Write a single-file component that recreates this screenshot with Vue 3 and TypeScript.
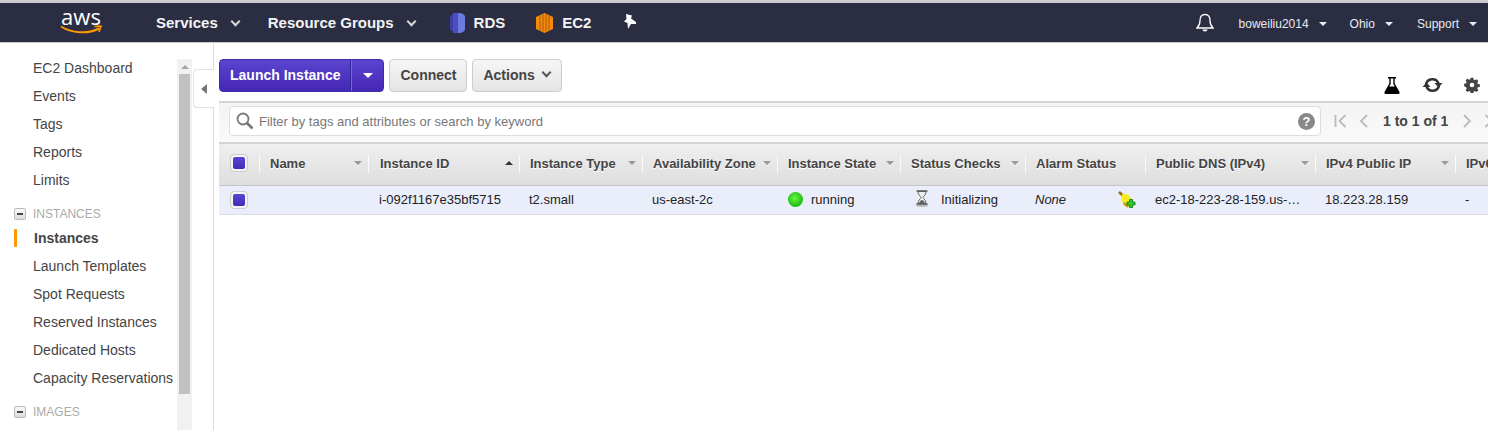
<script setup lang="ts">
interface Column {
  label: string
  sort: 'none' | 'down' | 'up'
}

const topItems = ['EC2 Dashboard', 'Events', 'Tags', 'Reports', 'Limits']
const instanceItems = [
  'Instances',
  'Launch Templates',
  'Spot Requests',
  'Reserved Instances',
  'Dedicated Hosts',
  'Capacity Reservations'
]

const columns: Column[] = [
  { label: 'Name', sort: 'down' },
  { label: 'Instance ID', sort: 'up' },
  { label: 'Instance Type', sort: 'down' },
  { label: 'Availability Zone', sort: 'down' },
  { label: 'Instance State', sort: 'down' },
  { label: 'Status Checks', sort: 'down' },
  { label: 'Alarm Status', sort: 'none' },
  { label: 'Public DNS (IPv4)', sort: 'down' },
  { label: 'IPv4 Public IP', sort: 'down' },
  { label: 'IPv6 IPs', sort: 'none' }
]
</script>

<template>
  <div class="console">
    <header class="topbar">
      <div class="logo">
        <span class="logo-text">aws</span>
        <svg class="smile" width="42" height="10" viewBox="0 0 42 10">
          <path d="M1 1.500C11 8 28 9.500 39 3.500" fill="none" stroke="#f90" stroke-width="2" />
          <path d="M34.500 1.500L41 1.200L39 7" fill="none" stroke="#f90" stroke-width="1.600" />
        </svg>
      </div>
      <a class="nav-main services">Services<i class="chev"></i></a>
      <a class="nav-main groups">Resource Groups<i class="chev"></i></a>
      <a class="shortcut rds">
        <svg width="15" height="20" viewBox="0 0 15 20">
          <path d="M3 1.500C1 2 0 3 0 4v12c0 1 1 2 3 2.500z" fill="#3b3fa6" />
          <rect x="3" y="0" width="5" height="20" fill="#4a4fc0" />
          <path d="M8 0h2c3 .5 5 2 5 4v12c0 2-2 3.500-5 4H8z" fill="#6d7be0" />
        </svg>
        RDS
      </a>
      <a class="shortcut ec2">
        <svg width="17" height="20" viewBox="0 0 17 20">
          <path d="M0 4l8.500-4L17 4v12l-8.500 4L0 16z" fill="#f58a0b" />
          <path d="M4 2.500v15M7 1.500v17M10 1.500v17M13 2.500v15" stroke="#a85c08" stroke-width="1" />
        </svg>
        EC2
      </a>
      <svg class="pin" width="14" height="15" viewBox="0 0 14 15">
        <path d="M3 0L9 1.500L8 4.500L13 8L13 10L8 10L5 15L4.500 9L1 7.500L3.500 5z" fill="#fff" />
      </svg>
      <svg class="bell" width="18" height="20" viewBox="0 0 18 20">
        <path d="M9 1.500c-3.500 0-5 2.500-5 6 0 3.500-1 5.500-3 7.500h16c-2-2-3-4-3-7.500 0-3.500-1.500-6-5-6z" fill="none" stroke="#fff" stroke-width="1.300" />
        <path d="M6.500 16.500h5c0 1-1 2-2.500 2s-2.500-1-2.500-2z" fill="#fff" />
      </svg>
      <a class="nav-small user">boweiliu2014<i class="caret"></i></a>
      <a class="nav-small region">Ohio<i class="caret"></i></a>
      <a class="nav-small support">Support<i class="caret"></i></a>
    </header>

    <div class="body">
      <aside class="sidebar">
        <nav class="menu">
          <a v-for="item in topItems" :key="item" class="menu-item">{{ item }}</a>
          <div class="section"><span class="minus"></span>INSTANCES</div>
          <a
            v-for="(item, i) in instanceItems"
            :key="item"
            class="menu-item"
            :class="{ active: i === 0 }"
          >{{ item }}</a>
          <div class="section images"><span class="minus"></span>IMAGES</div>
        </nav>
        <div class="scrollbar">
          <span class="scroll-up"></span>
          <span class="scroll-thumb"></span>
        </div>
      </aside>

      <div class="collapse-col">
        <div class="collapse-tab"><span class="tri-left"></span></div>
      </div>

      <main class="content">
        <div class="toolbar">
          <div class="launch">
            <span class="launch-main">Launch Instance</span>
            <span class="launch-drop"><i></i></span>
          </div>
          <button class="btn">Connect</button>
          <button class="btn">Actions<i class="btn-chev"></i></button>
          <div class="tools">
            <svg width="16" height="18" viewBox="0 0 16 18">
              <path d="M4 1h8v1.500h-1.300v5L15.500 16c.4 1-.2 2-1.300 2H1.800C.7 18 .1 17 .5 16L5.300 7.500v-5H4z" fill="#000" />
              <path d="M6.700 2.500h2.600v5.400l1.500 2.600H5.200l1.500-2.600z" fill="#fff" />
            </svg>
            <svg width="21" height="18" viewBox="0 0 21 18">
              <path d="M4 8.500A6.500 6.500 0 0 1 16.500 7.500" fill="none" stroke="#333" stroke-width="2.600" />
              <path d="M12.500 7h8l-4 4.500z" fill="#333" />
              <path d="M17 9.500A6.500 6.500 0 0 1 4.500 10.500" fill="none" stroke="#333" stroke-width="2.600" />
              <path d="M.5 11h8l-4-4.500z" fill="#333" />
            </svg>
            <svg width="16" height="16" viewBox="0 0 16 16">
              <path d="M6.500 0h3l.4 2.200 1.300.6 1.900-1.200 2 2-1.200 1.900.6 1.300 2.200.4v3l-2.200.4-.6 1.300 1.200 1.900-2 2-1.900-1.200-1.300.6-.4 2.200h-3l-.4-2.200-1.300-.6-1.900 1.200-2-2 1.200-1.900-.6-1.300L-.7 9.500v-3l2.200-.4.6-1.300L.9 2.900l2-2 1.900 1.200 1.300-.6z" fill="#444" transform="translate(.8 .8) scale(.9)" />
              <circle cx="8" cy="8" r="2.300" fill="#fff" />
            </svg>
          </div>
        </div>

        <div class="filter-band">
          <div class="search">
            <svg class="glass" width="18" height="18" viewBox="0 0 18 18">
              <circle cx="7" cy="7" r="5.500" fill="none" stroke="#777" stroke-width="1.800" />
              <path d="M11 11l5.500 5.500" stroke="#777" stroke-width="2.600" />
            </svg>
            <span class="placeholder">Filter by tags and attributes or search by keyword</span>
            <span class="help">?</span>
          </div>
          <div class="pager">
            <svg width="13" height="14" viewBox="0 0 13 14">
              <path d="M1.500 1v12M11.500 1l-6 6 6 6" fill="none" stroke="#bbb" stroke-width="1.800" />
            </svg>
            <svg class="pager-prev" width="9" height="14" viewBox="0 0 9 14">
              <path d="M8 1L2 7l6 6" fill="none" stroke="#bbb" stroke-width="1.800" />
            </svg>
            <span class="pager-text">1 to 1 of 1</span>
            <svg class="pager-next" width="9" height="14" viewBox="0 0 9 14">
              <path d="M1 1l6 6-6 6" fill="none" stroke="#bbb" stroke-width="1.800" />
            </svg>
            <svg class="pager-last" width="13" height="14" viewBox="0 0 13 14">
              <path d="M1.500 1l6 6-6 6M11.500 1v12" fill="none" stroke="#bbb" stroke-width="1.800" />
            </svg>
          </div>
        </div>

        <div class="grid head">
          <div class="cell check-cell"><span class="check"><i></i></span></div>
          <div v-for="col in columns" :key="col.label" class="cell head-cell">
            <span class="head-label">{{ col.label }}</span>
            <i v-if="col.sort === 'down'" class="sort"></i>
            <i v-else-if="col.sort === 'up'" class="sort up"></i>
          </div>
        </div>

        <div class="grid row">
          <div class="cell check-cell"><span class="check"><i></i></span></div>
          <div class="cell"></div>
          <div class="cell id-cell">i-092f1167e35bf5715</div>
          <div class="cell">t2.small</div>
          <div class="cell">us-east-2c</div>
          <div class="cell state"><span class="dot"></span>running</div>
          <div class="cell status">
            <svg class="hourglass" width="14" height="17" viewBox="0 0 14 17">
              <ellipse cx="7" cy="15.500" rx="6.500" ry="1.400" fill="#bbb" />
              <path d="M1.500 1h11M1.500 14h11" stroke="#555" stroke-width="1.500" />
              <path d="M3 1.500h8C11 5 8.500 6 8 7.500c.5 1.500 3 2.500 3 6H3c0-3.500 2.500-4.500 3-6-.5-1.500-3-2.500-3-6z" fill="#eee" stroke="#555" stroke-width=".9" />
              <path d="M4 13.300c.5-2 2-3 3-3.300 1 .3 2.500 1.300 3 3.300z" fill="#666" />
            </svg>
            Initializing
          </div>
          <div class="cell alarm">
            <em>None</em>
            <svg class="broom" width="19" height="18" viewBox="0 0 19 18">
              <path d="M1 1L5.500 5" stroke="#8a6a12" stroke-width="2.600" />
              <path d="M4 3L10 3.500L14.500 9L13 14.500L9 16.500L5 13L3.500 8z" fill="#f5ec1a" />
              <path d="M5 13L9 16.500L11 15.500L7 11z" fill="#b9a20f" />
              <path d="M11.500 8.500h3v2.500h2.500v3h-2.500v2.500h-3V14H9v-3h2.500z" fill="#35c435" stroke="#0a7a0a" stroke-width=".8" />
            </svg>
          </div>
          <div class="cell">ec2-18-223-28-159.us-…</div>
          <div class="cell">18.223.28.159</div>
          <div class="cell">-</div>
        </div>
      </main>
    </div>
  </div>
</template>

<style>
html,
body {
  height: 430px;
  overflow: hidden;
  background: #fff;
}
</style>

<style scoped>
.console {
  width: 1488px;
  height: 430px;
  overflow: hidden;
  display: flex;
  flex-direction: column;
  font-family: 'Liberation Sans', Arial, sans-serif;
  color: #444;
  border-top: 3px solid #ccc;
  box-sizing: border-box;
}

.topbar {
  flex: none;
  height: 40px;
  box-sizing: border-box;
  display: flex;
  align-items: center;
  background: #2b2e42;
  border-bottom: 1px solid #c9c9c9;
  color: #fff;
}

.logo {
  width: 44px;
  margin-left: 59px;
  display: flex;
  flex-direction: column;
  align-items: center;
  position: relative;
  top: -2px;
}

.logo-text {
  font-family: 'Open Sans', 'Liberation Sans', sans-serif;
  font-size: 22px;
  line-height: 18px;
}

.smile {
  display: block;
  flex: none;
}

.nav-main {
  font-size: 15px;
  font-weight: 700;
  color: #f2f3f3;
  display: flex;
  align-items: center;
}

.services {
  margin-left: 53px;
}

.groups {
  margin-left: 29px;
}

.chev {
  width: 5px;
  height: 5px;
  margin-left: 14px;
  margin-top: -2px;
  border-right: 2px solid #d8d8d8;
  border-bottom: 2px solid #d8d8d8;
  transform: rotate(45deg);
}

.shortcut {
  display: flex;
  align-items: center;
  font-size: 15px;
  font-weight: 700;
  color: #f2f3f3;
}

.shortcut svg {
  display: block;
}

.rds {
  margin-left: 35px;
  gap: 9px;
}

.ec2 {
  margin-left: 31px;
  gap: 9px;
}

.pin {
  margin-left: 32px;
  margin-top: -2px;
}

.bell {
  margin-left: auto;
  margin-right: 25px;
}

.nav-small {
  font-size: 12px;
  color: #e8eaf0;
  display: flex;
  align-items: center;
  padding-top: 2px;
}

.user {
  margin-right: 1px;
}

.region {
  margin-left: 22px;
}

.support {
  margin-left: 24px;
  margin-right: 11px;
}

.caret {
  width: 0;
  height: 0;
  margin-left: 10px;
  border-left: 4px solid transparent;
  border-right: 4px solid transparent;
  border-top: 4px solid #e8eaf0;
}

.body {
  flex: 1;
  min-height: 0;
  display: flex;
}

.sidebar {
  flex: none;
  width: 192px;
  display: flex;
  padding-top: 16px;
  box-sizing: border-box;
}

.menu {
  flex: none;
  width: 177px;
  white-space: nowrap;
  font-size: 14px;
}

.menu-item {
  display: block;
  height: 28px;
  line-height: 18px;
  padding-left: 33px;
  color: #444;
}

.menu-item.active {
  font-weight: 700;
  padding-left: 34px;
  position: relative;
}

.menu-item.active::before {
  content: '';
  position: absolute;
  left: 14px;
  top: 0;
  width: 3px;
  height: 18px;
  background: #f90;
  border-radius: 1px;
}

.section {
  display: flex;
  align-items: center;
  height: 26px;
  margin: 2px 0;
  font-size: 12px;
  color: #aaa;
  padding-left: 14px;
}

.minus {
  width: 10px;
  height: 10px;
  margin-right: 7px;
  border: 1px solid #bbb;
  border-radius: 2px;
  background: linear-gradient(#f8f8f8, #ddd);
  position: relative;
}

.minus::after {
  content: '';
  position: absolute;
  left: 2px;
  right: 2px;
  top: 4px;
  height: 2px;
  background: #444;
}

.scrollbar {
  flex: 1;
  background: #f1f1f1;
  display: flex;
  flex-direction: column;
  align-items: center;
}

.scroll-up {
  margin-top: 6px;
  width: 0;
  height: 0;
  border-left: 4px solid transparent;
  border-right: 4px solid transparent;
  border-bottom: 4px solid #a3a3a3;
}

.scroll-thumb {
  margin-top: 5px;
  width: 11px;
  height: 320px;
  background: #c1c1c1;
}

.collapse-col {
  flex: none;
  width: 22px;
  box-sizing: border-box;
  border-right: 1px solid #ddd;
  padding-top: 26px;
}

.collapse-tab {
  width: 22px;
  height: 39px;
  margin-left: 1px;
  box-sizing: border-box;
  border: 1px solid #e1e1e1;
  border-right: 1px solid #fff;
  border-radius: 4px 0 0 4px;
  background: #fff;
  display: flex;
  align-items: center;
  padding-left: 7px;
}

.tri-left {
  width: 0;
  height: 0;
  border-top: 5px solid transparent;
  border-bottom: 5px solid transparent;
  border-right: 6px solid #777;
}

.content {
  flex: none;
  width: 1269px;
  margin-left: 5px;
  overflow: hidden;
  display: flex;
  flex-direction: column;
}

.toolbar {
  flex: none;
  height: 58px;
  padding-top: 16px;
  box-sizing: border-box;
  display: flex;
  align-items: flex-start;
  gap: 5px;
}

.launch {
  display: flex;
  height: 33px;
  box-sizing: border-box;
  border-radius: 4px;
  border: 1px solid #3a2fa8;
  background: linear-gradient(#5b45cf, #4527b5);
  color: #fff;
  font-size: 14px;
  font-weight: 700;
  line-height: 30px;
}

.launch-main {
  padding: 0 10px;
  border-right: 1px solid #2e2596;
}

.launch-drop {
  width: 31px;
  border-left: 1px solid #7a68d8;
  display: flex;
  align-items: center;
  justify-content: center;
}

.launch-drop i {
  width: 0;
  height: 0;
  border-left: 5px solid transparent;
  border-right: 5px solid transparent;
  border-top: 5px solid #fff;
}

.btn {
  height: 33px;
  box-sizing: border-box;
  padding: 0 10px 2px;
  border: 1px solid #ccc;
  border-radius: 4px;
  background: linear-gradient(#f6f6f6, #e4e4e4);
  color: #444;
  font-family: inherit;
  font-size: 14px;
  font-weight: 700;
  display: flex;
  align-items: center;
}

.btn-chev {
  width: 5px;
  height: 5px;
  margin-left: 8px;
  margin-right: 1px;
  margin-top: -5px;
  border-right: 2px solid #555;
  border-bottom: 2px solid #555;
  transform: rotate(45deg);
}

.tools {
  margin-left: auto;
  display: flex;
  align-items: center;
  gap: 21.5px;
  padding-right: 8px;
  padding-top: 17px;
}

.tools svg {
  display: block;
}

.filter-band {
  flex: none;
  height: 43px;
  box-sizing: border-box;
  padding: 3px 0 0 10px;
  display: flex;
  background: linear-gradient(#f3f3f3, #fafafa);
  border-top: 2px solid #d5d5d5;
  border-bottom: 2px solid #d5d5d5;
}

.search {
  flex: none;
  width: 1092px;
  height: 30px;
  box-sizing: border-box;
  background: #fff;
  border: 1px solid #ddd;
  border-radius: 4px;
  display: flex;
  align-items: center;
  padding: 0 5px;
  font-size: 13px;
}

.glass {
  flex: none;
  margin-left: 1px;
}

.placeholder {
  margin-left: 5px;
  color: #777;
}

.help {
  margin-left: auto;
  width: 17px;
  height: 17px;
  border-radius: 50%;
  background: #888;
  color: #fff;
  font-size: 13px;
  font-weight: 700;
  line-height: 17px;
  text-align: center;
}

.pager {
  margin-left: 13px;
  height: 30px;
  display: flex;
  align-items: center;
  white-space: nowrap;
}

.pager-prev {
  margin-left: 12px;
}

.pager-text {
  margin-left: 15px;
  font-size: 14px;
  font-weight: 700;
  color: #444;
}

.pager-next {
  margin-left: 15px;
}

.pager-last {
  margin-left: 12px;
}

.grid {
  flex: none;
  display: grid;
  grid-template-columns: 40px 109px 151px 123px 135px 123px 125px 120px 170px 140px 100px;
}

.head {
  height: 42px;
  box-sizing: border-box;
  padding-bottom: 3px;
  background: linear-gradient(#efefef, #dedede);
  border-bottom: 1px solid #c6c6c6;
  font-size: 13px;
  font-weight: 700;
  color: #444;
}

.row {
  height: 29px;
  box-sizing: border-box;
  padding-bottom: 1px;
  background: #eaeefb;
  border-bottom: 1px solid #dcdcdc;
  font-size: 13px;
  color: #222;
}

.cell {
  display: flex;
  align-items: center;
  padding-left: 10px;
  min-width: 0;
  white-space: nowrap;
  position: relative;
}

.check-cell {
  padding-left: 11px;
}

.id-cell {
  padding-left: 11px;
}

.check {
  width: 18px;
  height: 18px;
  box-sizing: border-box;
  border: 1px solid #ccc;
  border-radius: 4px;
  background: #f4f4f4;
  padding: 2px;
  display: block;
}

.check i {
  display: block;
  width: 100%;
  height: 100%;
  border-radius: 2px;
  background: linear-gradient(#5746d2, #4429b8);
}

.head-cell {
  padding-left: 11px;
  padding-right: 6px;
  text-shadow: 0 1px 0 #fff;
}

.head-cell:nth-child(3) {
  padding-left: 12px;
}

.head-cell::before {
  content: '';
  position: absolute;
  left: 0;
  top: 11px;
  height: 18px;
  width: 1px;
  background: #fafafa;
}

.head-label {
  flex: 1;
  min-width: 0;
}

.sort {
  flex: none;
  width: 0;
  height: 0;
  border-left: 4px solid transparent;
  border-right: 4px solid transparent;
  border-top: 4px solid #999;
}

.sort.up {
  border-top: 0;
  border-bottom: 4px solid #333;
}

.state {
  padding-left: 11px;
}

.dot {
  width: 15px;
  height: 15px;
  border-radius: 50%;
  margin-right: 8px;
  background: radial-gradient(circle at 45% 40%, #66f53f, #16b90e 75%);
}

.status {
  padding-left: 15px;
}

.hourglass {
  margin-right: 12px;
  margin-top: -3px;
}

.alarm em {
  font-style: italic;
}

.broom {
  margin-left: auto;
  margin-right: 8px;
}
</style>
